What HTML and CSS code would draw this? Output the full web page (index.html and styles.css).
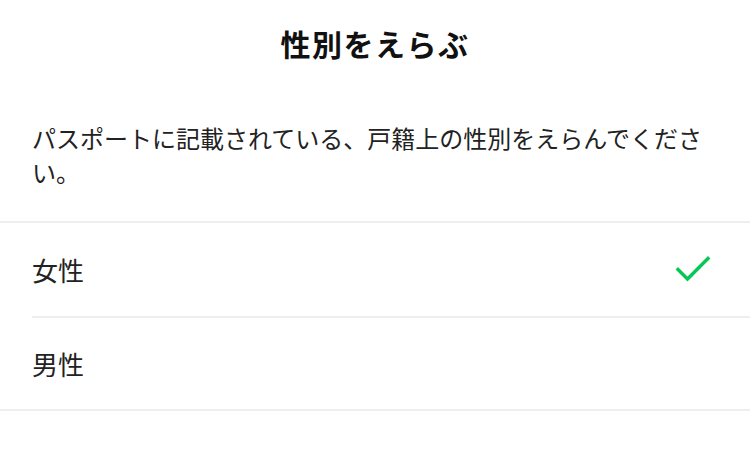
FILE: index.html
```html
<!DOCTYPE html>
<html lang="ja">
<head>
<meta charset="utf-8">
<title>性別をえらぶ</title>
<link rel="stylesheet" href="styles.css">
</head>
<body>
<header class="header">
  <h1 class="title">性別をえらぶ</h1>
</header>
<p class="desc">パスポートに記載されている、戸籍上の性別をえらんでください。</p>
<ul class="options">
  <li class="option">
    <span class="label">女性</span>
    <svg class="check" width="40" height="30" viewBox="0 0 40 30">
      <path d="M4 14.5 L13.5 24 L34 3.5" fill="none" stroke="#06c755" stroke-width="3.4" stroke-linecap="square" stroke-linejoin="miter"/>
    </svg>
  </li>
  <li class="option">
    <span class="label">男性</span>
  </li>
</ul>
</body>
</html>
```

FILE: styles.css
```css
* { box-sizing: border-box; }
html, body {
  margin: 0;
  padding: 0;
  background: #ffffff;
}
body {
  font-family: "Noto Sans CJK JP", "Noto Sans", sans-serif;
  color: #1e1e1e;
  width: 750px;
}
.header {
  height: 86px;
  display: flex;
  align-items: center;
  justify-content: center;
}
.title {
  margin: 0;
  font-size: 30px;
  font-weight: 700;
  letter-spacing: 1.5px;
  line-height: 1;
  color: #111;
}
.desc {
  margin: 0;
  padding: 35px 32px 32px 32px;
  font-size: 24px;
  line-height: 34px;
  color: #222;
}
.options {
  list-style: none;
  margin: 0;
  padding: 0;
  border-top: 2px solid #eeeeee;
  border-bottom: 2px solid #eeeeee;
}
.option {
  margin-left: 32px;
  padding-right: 36px;
  height: 93px;
  display: flex;
  align-items: center;
  justify-content: space-between;
}
.option + .option {
  border-top: 2px solid #eeeeee;
}
.label {
  font-size: 26px;
  line-height: 1;
  color: #222;
}
.check {
  display: block;
}
```
